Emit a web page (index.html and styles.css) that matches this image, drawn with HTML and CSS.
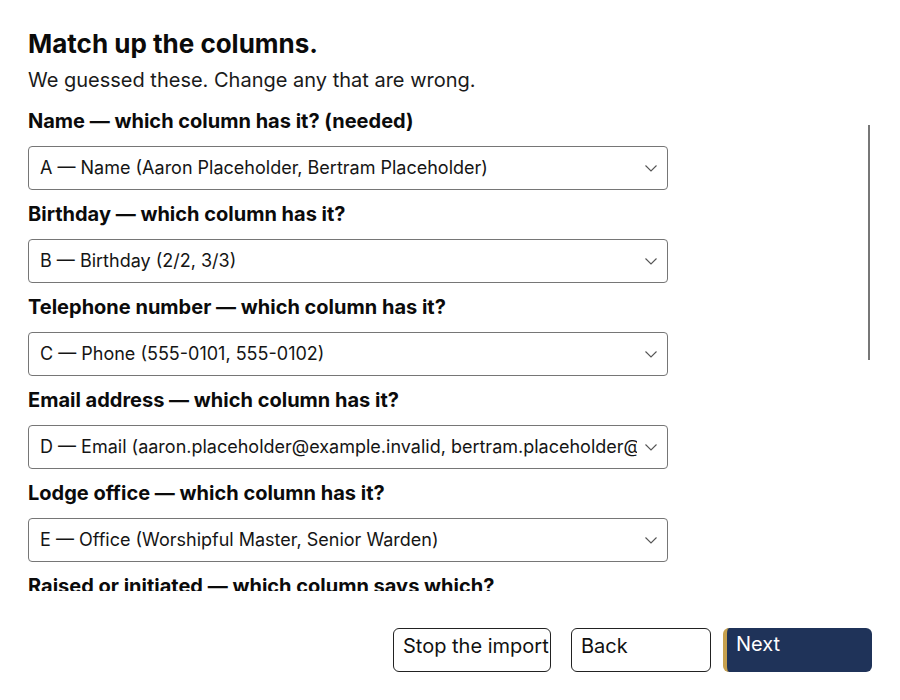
FILE: index.html
```html
<!DOCTYPE html>
<html lang="en">
<head>
<meta charset="utf-8">
<title>Match up the columns</title>
<link rel="stylesheet" href="styles.css">
</head>
<body>
<main class="page">
  <h1 class="title">Match up the columns.</h1>
  <p class="lead">We guessed these. Change any that are wrong.</p>
  <div class="fields-wrap">
    <div class="fields">
      <div class="field">
        <label class="label" for="f1">Name — which column has it? (needed)</label>
        <div class="pick-wrap">
          <select class="pick" id="f1"><option>A — Name (Aaron Placeholder, Bertram Placeholder)</option></select>
          <svg class="chev" width="12" height="7" viewBox="0 0 12 7"><path d="M0.5 0.5 L6 6 L11.5 0.5" fill="none" stroke="#555" stroke-width="1.1"/></svg>
        </div>
      </div>
      <div class="field">
        <label class="label" for="f2">Birthday — which column has it?</label>
        <div class="pick-wrap">
          <select class="pick" id="f2"><option>B — Birthday (2/2, 3/3)</option></select>
          <svg class="chev" width="12" height="7" viewBox="0 0 12 7"><path d="M0.5 0.5 L6 6 L11.5 0.5" fill="none" stroke="#555" stroke-width="1.1"/></svg>
        </div>
      </div>
      <div class="field">
        <label class="label" for="f3">Telephone number — which column has it?</label>
        <div class="pick-wrap">
          <select class="pick" id="f3"><option>C — Phone (555-0101, 555-0102)</option></select>
          <svg class="chev" width="12" height="7" viewBox="0 0 12 7"><path d="M0.5 0.5 L6 6 L11.5 0.5" fill="none" stroke="#555" stroke-width="1.1"/></svg>
        </div>
      </div>
      <div class="field">
        <label class="label" for="f4">Email address — which column has it?</label>
        <div class="pick-wrap">
          <select class="pick" id="f4"><option>D — Email (aaron.placeholder@example.invalid, bertram.placeholder@example.invalid)</option></select>
          <svg class="chev" width="12" height="7" viewBox="0 0 12 7"><path d="M0.5 0.5 L6 6 L11.5 0.5" fill="none" stroke="#555" stroke-width="1.1"/></svg>
        </div>
      </div>
      <div class="field">
        <label class="label" for="f5">Lodge office — which column has it?</label>
        <div class="pick-wrap">
          <select class="pick" id="f5"><option>E — Office (Worshipful Master, Senior Warden)</option></select>
          <svg class="chev" width="12" height="7" viewBox="0 0 12 7"><path d="M0.5 0.5 L6 6 L11.5 0.5" fill="none" stroke="#555" stroke-width="1.1"/></svg>
        </div>
      </div>
      <div class="field">
        <label class="label" for="f6">Raised or initiated — which column says which?</label>
        <div class="pick-wrap">
          <select class="pick" id="f6"><option>F — Status (Raised, Initiated)</option></select>
          <svg class="chev" width="12" height="7" viewBox="0 0 12 7"><path d="M0.5 0.5 L6 6 L11.5 0.5" fill="none" stroke="#555" stroke-width="1.1"/></svg>
        </div>
      </div>
      <div class="field">
        <label class="label" for="f7">Initiation date — which column has it?</label>
        <div class="pick-wrap">
          <select class="pick" id="f7"><option>G — Initiated (1/1, 4/4)</option></select>
          <svg class="chev" width="12" height="7" viewBox="0 0 12 7"><path d="M0.5 0.5 L6 6 L11.5 0.5" fill="none" stroke="#555" stroke-width="1.1"/></svg>
        </div>
      </div>
      <div class="field">
        <label class="label" for="f8">Raising date — which column has it?</label>
        <div class="pick-wrap">
          <select class="pick" id="f8"><option>H — Raised (5/5, 6/6)</option></select>
          <svg class="chev" width="12" height="7" viewBox="0 0 12 7"><path d="M0.5 0.5 L6 6 L11.5 0.5" fill="none" stroke="#555" stroke-width="1.1"/></svg>
        </div>
      </div>
      <div class="field">
        <label class="label" for="f9">Address — which column has it?</label>
        <div class="pick-wrap">
          <select class="pick" id="f9"><option>I — Address (1 Example Street, 2 Example Road)</option></select>
          <svg class="chev" width="12" height="7" viewBox="0 0 12 7"><path d="M0.5 0.5 L6 6 L11.5 0.5" fill="none" stroke="#555" stroke-width="1.1"/></svg>
        </div>
      </div>
      <div class="field">
        <label class="label" for="f10">Notes — which column has them?</label>
        <div class="pick-wrap">
          <select class="pick" id="f10"><option>(none)</option></select>
          <svg class="chev" width="12" height="7" viewBox="0 0 12 7"><path d="M0.5 0.5 L6 6 L11.5 0.5" fill="none" stroke="#555" stroke-width="1.1"/></svg>
        </div>
      </div>
    </div>
    <div class="scroll-thumb"></div>
  </div>
  <div class="actions">
    <button class="btn btn-stop" type="button">Stop the import</button>
    <button class="btn btn-back" type="button">Back</button>
    <button class="btn btn-next" type="button">Next</button>
  </div>
</main>
</body>
</html>
```

FILE: styles.css
```css
html, body {
  margin: 0;
  padding: 0;
  background: #ffffff;
}

body {
  font-family: Inter, "Noto Sans", "Liberation Sans", sans-serif;
  color: #111111;
}

.page {
  padding: 28px 28px 0 28px;
}

.title {
  margin: 0;
  font-size: 26px;
  line-height: 32px;
  font-weight: 700;
  color: #0b0b0b;
}

.lead {
  margin: 6px 0 0 0;
  font-size: 20px;
  line-height: 28px;
  color: #1a1a1a;
}

.fields-wrap {
  position: relative;
  margin-top: 14px;
}

.fields {
  height: 483px;
  overflow-y: auto;
  scrollbar-width: none;
}

.fields::-webkit-scrollbar {
  display: none;
}

.scroll-thumb {
  position: absolute;
  right: 2px;
  top: 17px;
  width: 2px;
  height: 235px;
  background: #777777;
}

.field {
  display: flex;
  flex-direction: column;
  align-items: flex-start;
  padding-bottom: 11px;
}

.label {
  font-size: 20px;
  line-height: 26px;
  font-weight: 700;
  color: #0b0b0b;
  margin-bottom: 12px;
}

.pick-wrap {
  position: relative;
  width: 640px;
  height: 44px;
}

.pick {
  box-sizing: border-box;
  appearance: none;
  -webkit-appearance: none;
  width: 640px;
  height: 44px;
  font-family: Inter, "Noto Sans", "Liberation Sans", sans-serif;
  font-size: 18px;
  color: #151515;
  background-color: #ffffff;
  border: 1px solid #767676;
  border-radius: 4px;
  padding: 0 30px 2px 11px;
  text-overflow: clip;
}

.chev {
  position: absolute;
  right: 11px;
  top: 19px;
  pointer-events: none;
}

.actions {
  display: flex;
  justify-content: flex-end;
  align-items: flex-start;
  margin-top: 37px;
}

.btn {
  box-sizing: border-box;
  height: 44px;
  font-family: Inter, "Noto Sans", "Liberation Sans", sans-serif;
  font-size: 20px;
  line-height: 24px;
  text-align: left;
  white-space: nowrap;
  padding: 5px 0 13px 9px;
  border-radius: 6px;
  cursor: pointer;
}

.btn-stop {
  width: 158px;
  background: #ffffff;
  color: #111111;
  border: 1px solid #222222;
}

.btn-back {
  width: 140px;
  margin-left: 20px;
  background: #ffffff;
  color: #111111;
  border: 1px solid #222222;
}

.btn-next {
  width: 149px;
  margin-left: 12px;
  background: #1f3359;
  color: #ffffff;
  border: none;
  border-left: 4px solid #c6a04e;
  padding: 4px 0 16px 9px;
}
```
